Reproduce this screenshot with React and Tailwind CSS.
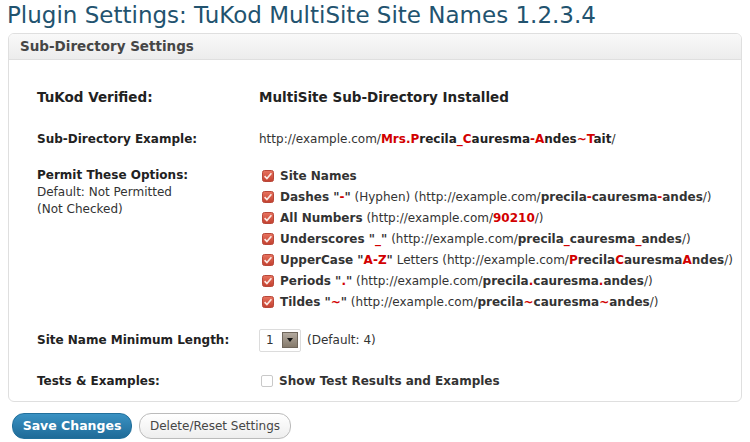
import React from 'react'

const R = ({ children }) => <span className="text-[#d20000]">{children}</span>

function Check({ checked }) {
  if (!checked) {
    return (
      <span className="inline-block w-[12px] h-[12px] shrink-0 rounded-[2px] border border-[#c9c9c9] bg-white" />
    )
  }
  return (
    <svg width="12" height="12" viewBox="0 0 12 12" className="shrink-0">
      <defs>
        <linearGradient id="cb" x1="0" y1="0" x2="0" y2="1">
          <stop offset="0" stopColor="#e8735f" />
          <stop offset="1" stopColor="#c2402f" />
        </linearGradient>
      </defs>
      <rect x="0.5" y="0.5" width="11" height="11" rx="2" fill="url(#cb)" stroke="#b8483a" />
      <path d="M2.6 6.2 L4.9 8.6 L9.4 3.2" fill="none" stroke="#fbe9e4" strokeWidth="1.7" />
    </svg>
  )
}

function Row({ children, className }) {
  return <div className={'flex ' + className}>{children}</div>
}

function Label({ children, className = '' }) {
  return <div className={'w-[222px] shrink-0 font-bold text-[#222] ' + className}>{children}</div>
}

const opts = [
  [<b>Site Names</b>],
  [<b>Dashes "<R>-</R>"</b>, ' (Hyphen) (http://example.com/', <b>precila<R>-</R>cauresma<R>-</R>andes</b>, '/)'],
  [<b>All Numbers</b>, ' (http://example.com/', <b><R>90210</R></b>, '/)'],
  [<b>Underscores "<R>_</R>"</b>, ' (http://example.com/', <b>precila<R>_</R>cauresma<R>_</R>andes</b>, '/)'],
  [<b>UpperCase "<R>A-Z</R>"</b>, ' Letters (http://example.com/', <b><R>P</R>recila<R>C</R>auresma<R>A</R>ndes</b>, '/)'],
  [<b>Periods "<R>.</R>"</b>, ' (http://example.com/', <b>precila<R>.</R>cauresma<R>.</R>andes</b>, '/)'],
  [<b>Tildes "<R>~</R>"</b>, ' (http://example.com/', <b>precila<R>~</R>cauresma<R>~</R>andes</b>, '/)'],
]

export default function App() {
  return (
    <div className="w-[750px] h-[442px] bg-white overflow-hidden font-['DejaVu_Sans',sans-serif] text-[12px] text-[#333]">
      <h2 className="pl-[7px] pt-[1px] h-[33px] text-[23px] leading-[28px] text-[#22536f]">
        Plugin Settings: TuKod MultiSite Site Names 1.2.3.4
      </h2>

      <div className="ml-[8px] w-[734px] border border-[#dfdfdf] rounded-[6px] overflow-hidden">
        <div className="h-[26px] pl-[11px] flex items-center bg-gradient-to-b from-[#f9f9f9] to-[#ececec] border-b border-[#dfdfdf] font-bold text-[13.5px] text-[#464646]">
          Sub-Directory Settings
        </div>

        <div className="pl-[28px] pt-[16px]">
          <Row className="h-[42px] items-center">
            <Label className="text-[13.5px]">TuKod Verified:</Label>
            <div className="font-bold text-[13.5px] text-[#222]">MultiSite Sub-Directory Installed</div>
          </Row>

          <Row className="h-[42px] items-center">
            <Label>Sub-Directory Example:</Label>
            <div>
              http://example.com/
              <b className="text-[#222]">
                <R>Mrs.P</R>recila<R>_C</R>auresma<R>-A</R>ndes<R>~T</R>ait
              </b>
              /
            </div>
          </Row>

          <Row className="h-[159px] items-start">
            <Label className="pt-[7px] leading-[17px]">
              <div>Permit These Options:</div>
              <div className="font-normal text-[#333]">Default: Not Permitted</div>
              <div className="font-normal text-[#333]">(Not Checked)</div>
            </Label>
            <div className="pt-[5px] flex flex-col">
              {opts.map((o, i) => (
                <div key={i} className="h-[21px] flex items-center gap-[6px] pl-[3px]">
                  <Check checked />
                  <span className="whitespace-nowrap">
                    {o.map((p, j) => (
                      <React.Fragment key={j}>{p}</React.Fragment>
                    ))}
                  </span>
                </div>
              ))}
            </div>
          </Row>

          <Row className="h-[42px] items-center">
            <Label>Site Name Minimum Length:</Label>
            <div className="flex items-center">
              <div className="w-[42px] h-[23px] border border-[#dcdcdc] rounded-[2px] flex items-center justify-between pl-[6px] pr-[2px] bg-white">
                <span className="text-[#333]">1</span>
                <span className="w-[16px] h-[16px] bg-gradient-to-b from-[#b3aa9f] to-[#857a6c] border border-[#6f665b] flex items-center justify-center">
                  <svg width="6" height="4" viewBox="0 0 6 4">
                    <path d="M0 0 H6 L3 4 Z" fill="#111" />
                  </svg>
                </span>
              </div>
              <span className="ml-[6px]">(Default: 4)</span>
            </div>
          </Row>

          <Row className="h-[40px] items-center">
            <Label>Tests &amp; Examples:</Label>
            <div className="flex items-center gap-[6px] pl-[2px]">
              <Check checked={false} />
              <b className="text-[#333]">Show Test Results and Examples</b>
            </div>
          </Row>
        </div>
      </div>

      <div className="flex gap-[7px] pl-[12px] pt-[11px]">
        <button className="w-[120px] h-[26px] rounded-[12px] bg-gradient-to-b from-[#3a92c3] to-[#1f6b98] border border-[#22709c] text-white font-bold text-[12.5px]">
          Save Changes
        </button>
        <button className="w-[152px] h-[26px] rounded-[12px] bg-gradient-to-b from-[#ffffff] to-[#eeeeee] border border-[#bbbbbb] text-[#464646] text-[12px]">
          Delete/Reset Settings
        </button>
      </div>
    </div>
  )
}
